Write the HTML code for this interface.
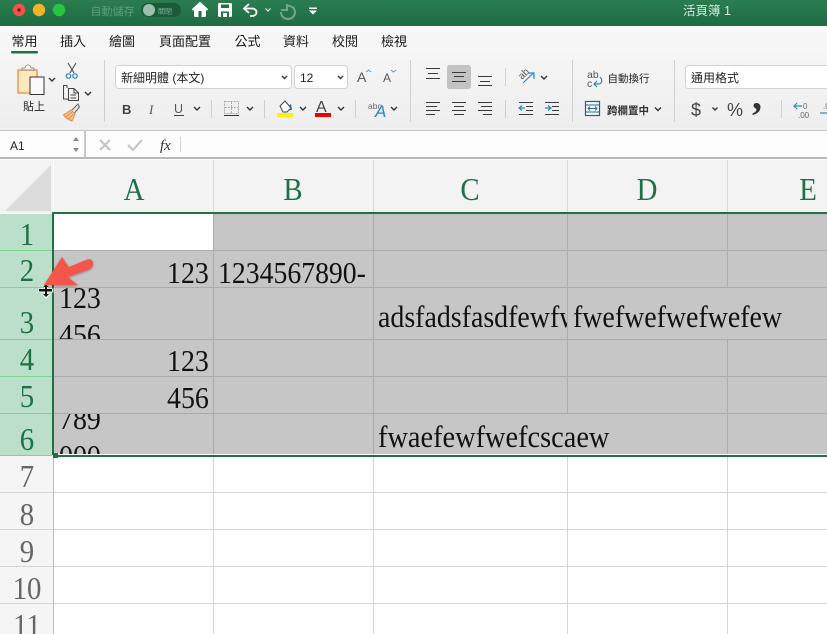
<!DOCTYPE html>
<html><head><meta charset="utf-8">
<style>
html,body{margin:0;padding:0;background:#fff;overflow:hidden;width:827px;height:634px}
svg{display:block}
.ui{font-family:"Liberation Sans","Noto Sans CJK TC",sans-serif}
.tab{font-size:13px;fill:#1a1a1a;font-family:"Liberation Sans","Noto Sans CJK TC",sans-serif}
.sm{font-size:10.500px;fill:#222;font-family:"Liberation Sans","Noto Sans CJK TC",sans-serif}
.c{font-family:"Liberation Serif",serif;font-size:31px;fill:#111}
.h{font-family:"Liberation Serif",serif;font-size:32px;fill:#1e7145;text-anchor:middle}
.g{font-family:"Liberation Serif",serif;font-size:32px;fill:#666;text-anchor:middle}
.ic{fill:none;stroke:#444;stroke-width:1}
.chev{fill:none;stroke:#333;stroke-width:1.4}
</style></head><body>
<svg width="827" height="634" viewBox="0 0 827 634" xmlns="http://www.w3.org/2000/svg">
<defs>
<linearGradient id="tb" x1="0" y1="0" x2="0" y2="1"><stop offset="0" stop-color="#2a7d50"/><stop offset="1" stop-color="#1f6b42"/></linearGradient>
<linearGradient id="rb" x1="0" y1="0" x2="0" y2="1"><stop offset="0" stop-color="#f8f8f8"/><stop offset="1" stop-color="#eeeeee"/></linearGradient>
<clipPath id="c1"><rect x="54" y="288" width="159" height="51"/></clipPath>
<clipPath id="c2"><rect x="54" y="414" width="159" height="40"/></clipPath>
<clipPath id="c3"><rect x="374" y="288" width="193" height="51"/></clipPath>
<filter id="sh" x="-20%" y="-20%" width="140%" height="140%"><feDropShadow dx="0" dy="1" stdDeviation="1.2" flood-color="#000" flood-opacity=".35"/></filter>
</defs>

<!-- title bar -->
<rect width="827" height="26" fill="url(#tb)"/>
<circle cx="19" cy="10" r="6.2" fill="#f0524c"/><circle cx="19" cy="10" r="1.7" fill="#7a1512"/>
<circle cx="39" cy="10" r="6.2" fill="#f5b328"/>
<circle cx="59" cy="10" r="6.2" fill="#27c63f"/>
<text x="90.500" y="15" font-size="11" fill="#5f9f7d" class="ui">自動儲存</text>
<rect x="141" y="3" width="40" height="14" rx="7" fill="#1b5c39"/>
<circle cx="149" cy="10" r="6" fill="#9dbfae"/>
<text x="158" y="13.500" font-size="7" fill="#7fb096" class="ui">關閉</text>
<!-- home -->
<path d="M192.500 10 L200 3 L207.500 10 M195 9.500 V16 H205 V9.500 Z" fill="#fff" stroke="#fff" stroke-width="2" stroke-linejoin="round"/><rect x="198.500" y="11" width="3" height="6" fill="#226f46"/>
<!-- save -->
<rect x="218" y="3" width="14" height="14" rx="1.500" fill="#fff"/><rect x="221" y="4.500" width="8" height="3.500" fill="#226f46"/><rect x="221" y="11.500" width="8" height="5.500" fill="#226f46"/><rect x="223" y="13" width="4" height="4" fill="#fff"/>
<!-- undo -->
<path d="M249 4 L244 8.500 L249 13 M244 8.500 H252 C258 8.500 258 16 252 16 H250" fill="none" stroke="#fff" stroke-width="1.800"/>
<path d="M265.500 8.500 L268 11 L270.500 8.500" fill="none" stroke="#dfeee6" stroke-width="1.200"/>
<!-- redo -->
<path d="M281 10 H287 V4 M286 6 C291 5 295 8 295 12 C295 16 292 19 288 19 C284 19 281 16 281 12" fill="none" stroke="#6ea78a" stroke-width="2"/>
<!-- qat menu -->
<rect x="309" y="7.500" width="8" height="1.500" fill="#fff"/><path d="M309 10.500 H317 L313 14.500 Z" fill="#fff"/>
<text x="683" y="15" font-size="12.500" fill="#d8e8df" class="ui">活頁簿 1</text>

<!-- ribbon -->
<rect y="26" width="827" height="104" fill="url(#rb)"/>
<text class="tab" x="11.500" y="46">常用</text>
<text class="tab" x="60" y="46">插入</text>
<text class="tab" x="109" y="46">繪圖</text>
<text class="tab" x="159" y="46">頁面配置</text>
<text class="tab" x="234.500" y="46">公式</text>
<text class="tab" x="283" y="46">資料</text>
<text class="tab" x="332" y="46">校閱</text>
<text class="tab" x="381" y="46">檢視</text>
<rect x="11" y="51" width="27" height="2.500" rx="1" fill="#1f7145"/>
<!-- separators -->
<g fill="#cfcfcf"><rect x="104" y="60" width="1" height="62"/><rect x="410" y="60" width="1" height="62"/><rect x="572" y="60" width="1" height="62"/><rect x="674" y="60" width="1" height="62"/>
<rect x="211" y="100" width="1" height="18"/><rect x="264" y="100" width="1" height="18"/><rect x="355" y="100" width="1" height="18"/><rect x="505" y="68" width="1" height="18"/><rect x="505" y="100" width="1" height="18"/><rect x="781" y="100" width="1" height="18"/></g>
<!-- clipboard -->
<rect x="18" y="70" width="19" height="23" fill="#fde9bd" stroke="#e8964a" stroke-width="1.400"/>
<path d="M22 70 V68 H25 C25 64 31 64 31 68 H34 V70 Z" fill="#f5f5f5" stroke="#777" stroke-width=".8"/>
<rect x="30" y="77" width="14" height="17.500" fill="#fafafa" stroke="#333" stroke-width="1"/>
<path class="chev" d="M49 78 L52 81 L55 78"/>
<text class="sm" x="23" y="110" style="font-size:11px">貼上</text>
<!-- scissors -->
<path d="M68 63 L74 73 M76 63 L70 73" fill="none" stroke="#444" stroke-width="1"/>
<circle cx="68.500" cy="76" r="2.200" fill="none" stroke="#2d7dc0" stroke-width="1.200"/><circle cx="75" cy="76" r="2.200" fill="none" stroke="#2d7dc0" stroke-width="1.200"/>
<!-- copy -->
<path class="ic" stroke="#333" d="M67 85.500 H63.500 V99 H68 M67 85.500 V88"/>
<path class="ic" stroke="#333" d="M68.500 88.500 H74 L78.500 93 V100.500 H68.500 Z M74 88.500 V93 H78.500 M70.500 95 H76 M70.500 98 H76"/>
<path class="chev" d="M85 92 L88 95 L91 92"/>
<!-- painter -->
<path d="M63.500 115 L71 110 L75 114 L72 121 C69 120 66 118 63.500 115 Z" fill="#f8c79d" stroke="#ea8a3f" stroke-width="1"/>
<path d="M66 117 L72 112 M68.500 119 L73.500 114" stroke="#ea8a3f" stroke-width="1"/>
<path d="M72 110 L78 104 L79.500 107 L74.500 113" fill="#e8e8e8" stroke="#666" stroke-width="1"/>
<!-- font boxes -->
<rect x="115.500" y="65.500" width="176" height="23" rx="3" fill="#fff" stroke="#d2d2d2"/>
<text x="121" y="82" font-size="12" fill="#222" class="ui">新細明體 (本文)</text>
<path class="chev" d="M282 76 L284.500 78.500 L287 76"/>
<rect x="294.500" y="65.500" width="53" height="23" rx="3" fill="#fff" stroke="#d2d2d2"/>
<text x="300" y="82" font-size="12" fill="#222" class="ui">12</text>
<path class="chev" d="M338 76 L340.500 78.500 L343 76"/>
<text x="357" y="82" font-size="14" fill="#555" class="ui">A</text><path d="M366 72 L368.500 70 L371 72" fill="none" stroke="#5a9bd0" stroke-width="1"/>
<text x="383" y="82" font-size="12" fill="#555" class="ui">A</text><path d="M391 70 L393.500 72 L396 70" fill="none" stroke="#5a9bd0" stroke-width="1"/>
<!-- BIU -->
<text x="122" y="114" font-size="13" font-weight="bold" fill="#444" class="ui">B</text>
<text x="149" y="114" font-size="13" font-style="italic" fill="#555" font-family="Liberation Serif,serif">I</text>
<text x="174" y="113" font-size="12.500" fill="#555" class="ui">U</text><rect x="174" y="115" width="10" height="1" fill="#444"/>
<path class="chev" d="M194 107 L197 110 L200 107"/>
<!-- borders -->
<rect x="224.500" y="101.500" width="14" height="12" fill="none" stroke="#aaa" stroke-dasharray="2 1"/><path d="M231.500 102 V113 M225 107.500 H238" stroke="#aaa" stroke-dasharray="2 1"/><rect x="224" y="115" width="15" height="1" fill="#333"/>
<path class="chev" d="M247 107 L250 110 L253 107"/>
<!-- fill -->
<path d="M280 106 L285 101 L291 108 L287 112 H283 Z" fill="#fff" stroke="#444"/><path d="M290 110 C290 106 289 105 288 106 L291 104 L292 110" fill="#1f6fb5"/>
<rect x="277" y="113" width="16" height="4" fill="#fdf000"/>
<path class="chev" d="M300 107 L303 110 L306 107"/>
<text x="316" y="112" font-size="16" fill="#444" class="ui">A</text><rect x="315" y="113" width="16" height="4" fill="#ee0000"/>
<path class="chev" d="M338 107 L341 110 L344 107"/>
<text x="368" y="109" font-size="8.500" fill="#666" class="ui">abc</text>
<text x="375" y="117" font-size="17" font-style="italic" fill="#2e86c8" class="ui">A</text>
<path class="chev" d="M391 107 L394 110 L397 107"/>

<!-- alignment -->
<rect x="447" y="65" width="24" height="24" rx="2.500" fill="#c3c3c3"/>
<g fill="#3a3a3a">
<rect x="426" y="68" width="14" height="1"/><rect x="428" y="73" width="10" height="1"/><rect x="426" y="78" width="14" height="1"/>
<rect x="452" y="72" width="14" height="1"/><rect x="454" y="76" width="10" height="1"/><rect x="452" y="81" width="14" height="1"/>
<rect x="478" y="76" width="14" height="1"/><rect x="480" y="81" width="10" height="1"/><rect x="478" y="85" width="14" height="1"/>
<rect x="426" y="102" width="14" height="1"/><rect x="426" y="106" width="11" height="1"/><rect x="426" y="110" width="14" height="1"/><rect x="426" y="114" width="9" height="1"/>
<rect x="452" y="102" width="14" height="1"/><rect x="454" y="106" width="10" height="1"/><rect x="452" y="110" width="14" height="1"/><rect x="454" y="114" width="10" height="1"/>
<rect x="478" y="102" width="14" height="1"/><rect x="481" y="106" width="11" height="1"/><rect x="478" y="110" width="14" height="1"/><rect x="483" y="114" width="9" height="1"/>
<rect x="519" y="102" width="14" height="1"/><rect x="526" y="106" width="7" height="1"/><rect x="526" y="110" width="7" height="1"/><rect x="519" y="114" width="14" height="1"/>
<rect x="545" y="102" width="14" height="1"/><rect x="552" y="106" width="7" height="1"/><rect x="552" y="110" width="7" height="1"/><rect x="545" y="114" width="14" height="1"/>
</g>
<path d="M525 108 H519 M522 105.500 L519 108 L522 110.500" fill="none" stroke="#2e86c8" stroke-width="1.200"/>
<path d="M545 108 H551 M548 105.500 L551 108 L548 110.500" fill="none" stroke="#2e86c8" stroke-width="1.200"/>
<text x="0" y="0" font-size="10" fill="#555" class="ui" transform="translate(522,80) rotate(-45)">ab</text>
<path d="M523 83 L533.500 73 M528 73 H534 V79" fill="none" stroke="#2e86c8" stroke-width="1.200"/>
<path class="chev" d="M541 76 L544 79 L547 76"/>
<!-- wrap -->
<text x="587" y="78" font-size="10.500" fill="#555" class="ui">ab</text><text x="587" y="87" font-size="10.500" fill="#555" class="ui">c</text>
<path d="M600 77 C603 80 602 84 598 84 H594 M597 81 L594 84 L597 87" fill="none" stroke="#2e86c8" stroke-width="1.200"/>
<text class="sm" x="607.500" y="82">自動換行</text>
<!-- merge -->
<rect x="585.500" y="101.500" width="14" height="14" fill="#fff" stroke="#1f5f95" stroke-width="1.200"/><path d="M586 105 H599 M586 112 H599" stroke="#1f5f95"/>
<path d="M588 108.500 H597 M590 106.500 L588 108.500 L590 110.500 M595 106.500 L597 108.500 L595 110.500" fill="none" stroke="#1f6fb5"/>
<text x="607" y="114" font-size="10.500" font-weight="bold" fill="#333" class="ui">跨欄置中</text>
<path class="chev" d="M655 107.500 L658 110.500 L661 107.500"/>
<!-- number -->
<rect x="685.500" y="65.500" width="150" height="23" rx="3" fill="#fff" stroke="#d2d2d2"/>
<text x="691" y="82" font-size="12" fill="#222" class="ui">通用格式</text>
<text x="691" y="116" font-size="18" fill="#444" class="ui">$</text>
<path class="chev" d="M712.500 107.500 L715 110 L717.500 107.500"/>
<text x="727" y="116" font-size="18" fill="#444" class="ui">%</text>
<text x="752" y="109" font-size="40" font-weight="bold" fill="#333" font-family="Liberation Serif,serif">,</text>
<path d="M794 106 H802 M797 103 L794 106 L797 109" fill="none" stroke="#2e86c8" stroke-width="1.200"/>
<text x="803" y="109" font-size="8" fill="#666" class="ui">0</text><text x="798" y="118" font-size="8" fill="#666" class="ui">.00</text>
<text x="823" y="109" font-size="8" fill="#666" class="ui">.0</text>
<path d="M820 113 H827" stroke="#2e86c8" stroke-width="1.200"/>

<!-- formula bar -->
<rect y="130" width="827" height="1" fill="#c8c8c8"/>
<rect y="131" width="827" height="26" fill="#fdfdfd"/>
<rect y="157" width="827" height="2" fill="#b8b8b8"/>
<rect x="84" y="131" width="2" height="26" fill="#c8c8c8"/>
<text x="10" y="150" font-size="12" fill="#222" class="ui">A1</text>
<path d="M73 141 H79 L76 137 Z M73 148 H79 L76 152 Z" fill="#8a8a8a"/>
<path d="M100 140 L110 150 M110 140 L100 150" stroke="#c2c2c2" stroke-width="2"/>
<path d="M128 145 L133 150 L142 140" fill="none" stroke="#c2c2c2" stroke-width="2"/>
<text x="160" y="150" font-size="15" font-style="italic" fill="#333" font-family="Liberation Serif,serif">fx</text>
<rect x="180" y="137" width="1" height="15" fill="#d4d4d4"/>

<!-- sheet -->
<rect y="159" width="827" height="475" fill="#fff"/>
<rect x="0" y="160" width="827" height="53" fill="#f3f3f3"/>
<path d="M51 165 V211 H5 Z" fill="#dcdcdc"/>
<rect x="53" y="160" width="1" height="53" fill="#fdfdfd"/>
<g fill="#d8d8d8"><rect x="213" y="160" width="1" height="53"/><rect x="373" y="160" width="1" height="53"/><rect x="567" y="160" width="1" height="53"/><rect x="727" y="160" width="1" height="53"/></g>
<!-- unselected row hdr -->
<rect x="0" y="456" width="53" height="178" fill="#f5f5f5"/>
<g fill="#d4d4d4"><rect x="0" y="492" width="827" height="1"/><rect x="0" y="529" width="827" height="1"/><rect x="0" y="566" width="827" height="1"/><rect x="0" y="603" width="827" height="1"/>
<rect x="53" y="456" width="1" height="178" fill="#bdbdbd"/><rect x="213" y="456" width="1" height="178"/><rect x="373" y="456" width="1" height="178"/><rect x="567" y="456" width="1" height="178"/><rect x="727" y="456" width="1" height="178"/></g>
<!-- selected row hdr -->
<rect x="0" y="214" width="52" height="241" fill="#bcdfcc"/>
<g fill="#7fd391"><rect x="0" y="250" width="52" height="1"/><rect x="0" y="287" width="52" height="1"/><rect x="0" y="339" width="52" height="1"/><rect x="0" y="376" width="52" height="1"/><rect x="0" y="413" width="52" height="1"/></g>
<rect x="0" y="455" width="52" height="1" fill="#7fd391"/>
<!-- selected cells -->
<rect x="54" y="214" width="773" height="241" fill="#c6c6c6"/>
<rect x="54" y="214" width="159" height="36" fill="#fff"/>
<g fill="#ababab">
<rect x="54" y="250" width="773" height="1"/><rect x="54" y="287" width="773" height="1"/><rect x="54" y="339" width="773" height="1"/><rect x="54" y="376" width="773" height="1"/><rect x="54" y="413" width="773" height="1"/>
<rect x="213" y="214" width="1" height="241"/><rect x="373" y="214" width="1" height="241"/>
<rect x="567" y="214" width="1" height="200"/>
<rect x="727" y="214" width="1" height="74"/><rect x="727" y="339" width="1" height="116"/>
</g>
<!-- selection -->
<rect x="53" y="212" width="774" height="2" fill="#1f7145"/>
<rect x="52" y="212" width="2" height="243" fill="#1f7145"/>
<rect x="54" y="454" width="773" height="1" fill="#fff"/>
<rect x="58" y="455" width="769" height="2" fill="#1f7145"/>
<rect x="53" y="453" width="5" height="5" fill="#1f7145"/>

<!-- headers -->
<text class="h" transform="translate(134,200) scale(.9,1)">A</text>
<text class="h" transform="translate(293,200) scale(.9,1)">B</text>
<text class="h" transform="translate(470,200) scale(.9,1)">C</text>
<text class="h" transform="translate(647,200) scale(.9,1)">D</text>
<text class="h" transform="translate(808,200) scale(.9,1)">E</text>
<text class="h" transform="translate(27,245) scale(.9,1)">1</text>
<text class="h" transform="translate(27,281) scale(.9,1)">2</text>
<text class="h" transform="translate(27,333) scale(.9,1)">3</text>
<text class="h" transform="translate(27,370) scale(.9,1)">4</text>
<text class="h" transform="translate(27,407) scale(.9,1)">5</text>
<text class="h" transform="translate(27,450) scale(.9,1)">6</text>
<text class="g" transform="translate(27,487) scale(.9,1)">7</text>
<text class="g" transform="translate(27,525) scale(.9,1)">8</text>
<text class="g" transform="translate(27,562) scale(.9,1)">9</text>
<text class="g" transform="translate(27,599) scale(.9,1)">10</text>
<text class="g" transform="translate(27,636) scale(.9,1)">11</text>

<!-- cells -->
<text class="c" transform="translate(167,283) scale(.9,1)">123</text>
<text class="c" transform="translate(218,283) scale(.895,1)">1234567890-</text>
<g clip-path="url(#c1)">
<text class="c" transform="translate(59,308) scale(.9,1)">123</text>
<text class="c" transform="translate(59,345) scale(.9,1)">456</text>
</g>
<text class="c" transform="translate(167,371) scale(.9,1)">123</text>
<text class="c" transform="translate(167,408) scale(.9,1)">456</text>
<g clip-path="url(#c2)">
<text class="c" transform="translate(59,429) scale(.9,1)">789</text>
<text class="c" transform="translate(59,466) scale(.9,1)">000</text>
</g>
<g clip-path="url(#c3)"><text class="c" transform="translate(378,327) scale(.9,1)">adsfadsfasdfewfwefwef</text></g>
<text class="c" transform="translate(573,327) scale(.9,1)">fwefwefwefwefew</text>
<text class="c" transform="translate(378,447) scale(.915,1)">fwaefewfwefcscaew</text>

<!-- cursor -->
<path d="M46 283 L50 287 H48 V288.500 H53.500 V292.500 H48 V294 H50 L46 299 L42 294 H44 V292.500 H38.500 V288.500 H44 V287 H42 Z" fill="#fff" opacity=".8"/>
<rect x="39" y="289" width="13" height="2.500" fill="#111"/>
<rect x="45" y="285" width="2" height="11" fill="#111"/>
<path d="M43 287 L46 284.500 L49 287 Z M43 294 L46 297 L49 294 Z" fill="#111"/>
<!-- arrow -->
<path d="M44 285 L62 257 L69 267 L87 259.500 Q91 258.500 93 262 Q94 266 90 269 L68 277 L78 285 Z" fill="#f4574c" filter="url(#sh)"/>
</svg>
</body></html>
